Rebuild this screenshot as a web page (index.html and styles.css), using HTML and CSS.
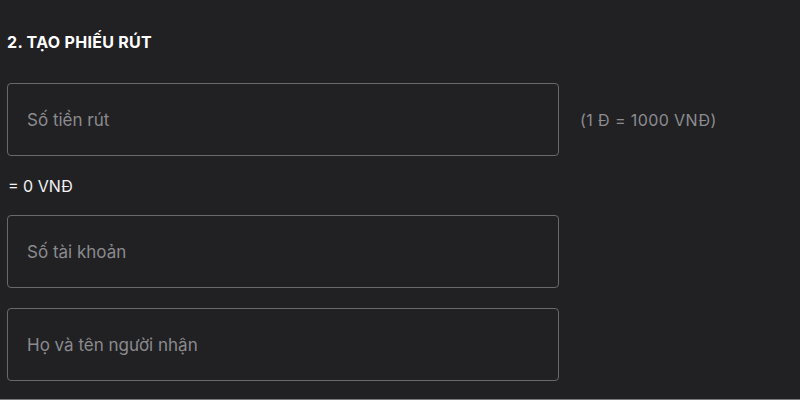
FILE: index.html
```html
<!DOCTYPE html>
<html lang="vi">
<head>
<meta charset="utf-8">
<link rel="stylesheet" href="styles.css">
</head>
<body>
<div class="page">
  <h2 class="title">2. TẠO PHIẾU RÚT</h2>
  <div class="row">
    <div class="field"><span class="ph">Số tiền rút</span></div>
    <span class="rate">(1 Đ = 1000 VNĐ)</span>
  </div>
  <div class="total">= 0 VNĐ</div>
  <div class="field"><span class="ph">Số tài khoản</span></div>
  <div class="field gap"><span class="ph">Họ và tên người nhận</span></div>
</div>
<div class="bottom-line"></div>
</body>
</html>
```
FILE: styles.css
```css
html, body {
  margin: 0;
  padding: 0;
  background: #212124;
  width: 800px;
  height: 400px;
  overflow: hidden;
  font-family: "Inter", "Noto Sans", sans-serif;
}
.page {
  padding: 31px 0 0 7px;
  height: 368px;
}
.title {
  margin: 0;
  color: #ffffff;
  font-size: 16px;
  font-weight: 700;
  line-height: 22px;
  letter-spacing: 0.3px;
}
.row {
  display: flex;
  align-items: center;
  margin-top: 30px;
}
.field {
  display: flex;
  align-items: center;
  padding-left: 19px;
  box-sizing: border-box;
  height: 73px;
  width: 552px;
  border: 1px solid #69696c;
  border-radius: 4px;
}
.ph {
  color: #8b8b8e;
  font-size: 17px;
}
.rate {
  margin-left: 21px;
  color: #8d8d90;
  font-size: 16px;
  letter-spacing: 0.4px;
}
.total {
  color: #f2f2f2;
  font-size: 16px;
  line-height: 20px;
  margin: 20px 0 19px 1px;
}
.gap {
  margin-top: 20px;
}
.bottom-line {
  height: 1px;
  background: #7a7a7c;
}
```
